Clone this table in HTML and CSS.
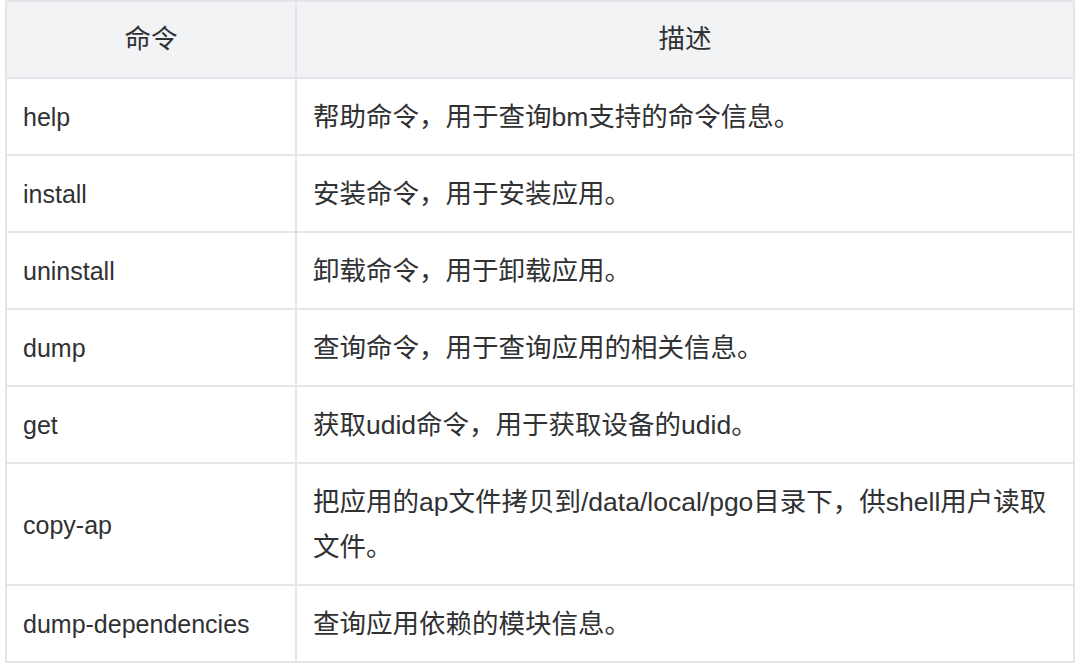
FILE: index.html
```html
<!DOCTYPE html>
<html lang="zh-CN">
<head>
<meta charset="utf-8">
<title>bm 命令</title>
<link rel="stylesheet" href="styles.css">
</head>
<body>
<table class="cmd-table">
  <thead>
    <tr><th class="col-cmd">命令</th><th>描述</th></tr>
  </thead>
  <tbody>
    <tr><td class="cmd">help</td><td class="desc">帮助命令，用于查询bm支持的命令信息。</td></tr>
    <tr><td class="cmd">install</td><td class="desc">安装命令，用于安装应用。</td></tr>
    <tr><td class="cmd">uninstall</td><td class="desc">卸载命令，用于卸载应用。</td></tr>
    <tr><td class="cmd">dump</td><td class="desc">查询命令，用于查询应用的相关信息。</td></tr>
    <tr><td class="cmd">get</td><td class="desc">获取udid命令，用于获取设备的udid。</td></tr>
    <tr><td class="cmd">copy-ap</td><td class="desc">把应用的ap文件拷贝到/data/local/pgo目录下，供shell用户读取文件。</td></tr>
    <tr><td class="cmd">dump-dependencies</td><td class="desc">查询应用依赖的模块信息。</td></tr>
  </tbody>
</table>
</body>
</html>
```

FILE: styles.css
```css
html, body {
  margin: 0;
  padding: 0;
  background: #ffffff;
}
body {
  padding: 0 5px;
  font-family: "Liberation Sans", "Noto Sans CJK SC", sans-serif;
  font-size: 25px;
  color: #303133;
}
.cmd-table {
  width: 1070px;
  border-collapse: collapse;
  table-layout: fixed;
}
.cmd-table th,
.cmd-table td {
  border: 2px solid #e3e5e9;
  padding: 16px 16px 14px;
  line-height: 45px;
  text-align: left;
  vertical-align: middle;
  font-weight: normal;
}
.cmd-table th {
  background: #f2f3f5;
  text-align: center;
  font-size: 26.5px;
  padding: 15px 16px;
}
.cmd-table .col-cmd {
  width: 256px;
}
.cmd-table .cmd {
  font-size: 25px;
}
.cmd-table .desc {
  font-size: 26.5px;
}
```
